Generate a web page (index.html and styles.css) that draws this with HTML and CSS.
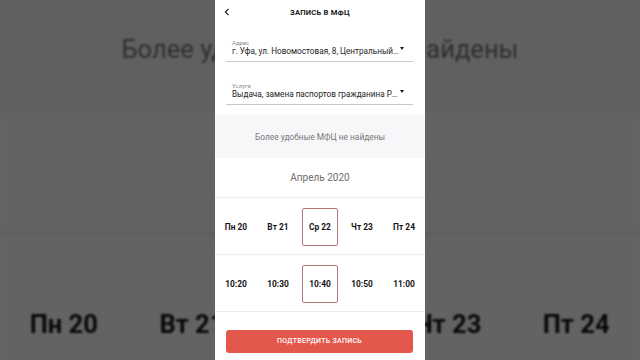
FILE: index.html
```html
<!DOCTYPE html>
<html lang="ru">
<head>
<meta charset="utf-8">
<title>Запись в МФЦ</title>
<link rel="stylesheet" href="styles.css">
</head>
<body>
<div class="stage">
  <div class="backdrop" aria-hidden="true">
    <div class="screen">
      <div class="top-spacer"></div>
      <div class="info">Более удобные МФЦ не найдены</div>
      <div class="month"></div>
      <div class="row days">
        <div class="cell"><span class="chip">Пн 20</span></div>
        <div class="cell"><span class="chip">Вт 21</span></div>
        <div class="cell"><span class="chip selected"></span></div>
        <div class="cell"><span class="chip">Чт 23</span></div>
        <div class="cell"><span class="chip">Пт 24</span></div>
      </div>
    </div>
  </div>

  <div class="screen main">
    <div class="header">
      <span class="back">
        <svg width="6" height="8" viewBox="0 0 6 8"><path d="M4.5 0.8 L1.4 4 L4.5 7.2" fill="none" stroke="#222" stroke-width="1.2"/></svg>
      </span>
      <div class="title">ЗАПИСЬ В МФЦ</div>
      <span></span>
    </div>
    <div class="form">
      <div class="field">
        <div class="label">Адрес</div>
        <div class="value"><span class="text">г. Уфа, ул. Новомостовая, 8, Центральный офис</span><span class="caret"></span></div>
      </div>
      <div class="field">
        <div class="label">Услуга</div>
        <div class="value"><span class="text">Выдача, замена паспортов гражданина России</span><span class="caret"></span></div>
      </div>
    </div>
    <div class="info">Более удобные МФЦ не найдены</div>
    <div class="month">Апрель 2020</div>
    <div class="row days">
      <div class="cell"><span class="chip">Пн 20</span></div>
      <div class="cell"><span class="chip">Вт 21</span></div>
      <div class="cell"><span class="chip selected">Ср 22</span></div>
      <div class="cell"><span class="chip">Чт 23</span></div>
      <div class="cell"><span class="chip">Пт 24</span></div>
    </div>
    <div class="row times">
      <div class="cell"><span class="chip">10:20</span></div>
      <div class="cell"><span class="chip">10:30</span></div>
      <div class="cell"><span class="chip selected">10:40</span></div>
      <div class="cell"><span class="chip">10:50</span></div>
      <div class="cell"><span class="chip">11:00</span></div>
    </div>
    <div class="actions">
      <button class="confirm">ПОДТВЕРДИТЬ ЗАПИСЬ</button>
    </div>
  </div>
</div>
</body>
</html>
```

FILE: styles.css
```css
* { box-sizing: border-box; }
html, body { margin: 0; padding: 0; }
body {
  background: #646464;
  font-family: Roboto, "Noto Sans", "Liberation Sans", sans-serif;
  overflow: hidden;
}
.stage {
  position: relative;
  width: 640px;
  height: 360px;
  display: flex;
  justify-content: center;
  overflow: hidden;
}
.backdrop {
  position: absolute;
  inset: 0;
  display: flex;
  justify-content: center;
  filter: blur(1px) brightness(0.39);
}
.backdrop .screen {
  transform: scale(3.05);
  transform-origin: 50% 50%;
}
.top-spacer { height: 115px; }
.screen {
  width: 210px;
  height: 360px;
  background: #fff;
  display: flex;
  flex-direction: column;
  flex-shrink: 0;
}
.main { position: relative; }

.header {
  height: 24px;
  display: grid;
  grid-template-columns: 24px 1fr 24px;
  align-items: center;
}
.back {
  padding-left: 9px;
  display: flex;
  align-items: center;
}
.title {
  text-align: center;
  font-size: 7.6px;
  font-weight: 700;
  color: #1a1a1a;
  letter-spacing: 0.2px;
}

.form {
  padding: 15px 12px 0 11px;
  display: flex;
  flex-direction: column;
  gap: 20px;
}
.field {
  border-bottom: 1px solid #c9c9c9;
  padding-bottom: 4px;
}
.label {
  font-size: 6px;
  line-height: 7px;
  color: #8a8a8a;
  padding-left: 6px;
}
.value {
  display: flex;
  align-items: center;
  height: 11px;
  padding-left: 6px;
}
.value .text {
  flex: 1;
  min-width: 0;
  white-space: nowrap;
  overflow: hidden;
  text-overflow: ellipsis;
  font-size: 8.2px;
  line-height: 11px;
  color: #1e1e1e;
}
.caret {
  width: 0;
  height: 0;
  border-left: 2.5px solid transparent;
  border-right: 2.5px solid transparent;
  border-top: 3px solid #1a1a1a;
  margin: 0 9px 6px 1px;
}

.info {
  margin-top: 10px;
  height: 43px;
  background: #f7f7fa;
  display: flex;
  align-items: center;
  justify-content: center;
  font-size: 8.4px;
  color: #777;
}
.backdrop .info { margin-top: 0; }
.month {
  height: 40px;
  display: flex;
  align-items: center;
  justify-content: center;
  font-size: 10px;
  color: #6e6e6e;
  border-bottom: 1px solid #ededed;
}
.row {
  height: 57px;
  display: grid;
  grid-template-columns: repeat(5, 1fr);
  border-bottom: 1px solid #ededed;
}
.cell {
  display: flex;
  align-items: center;
  justify-content: center;
  padding-top: 2px;
}
.chip {
  width: 36px;
  height: 38px;
  display: flex;
  align-items: center;
  justify-content: center;
  font-size: 8.4px;
  font-weight: 700;
  color: #141414;
  border: 1px solid transparent;
  border-radius: 2px;
  white-space: nowrap;
}
.chip.selected {
  border-color: #b57878;
}

.actions {
  padding: 16px 12px 0 11px;
}
.confirm {
  width: 100%;
  height: 23px;
  border: none;
  border-radius: 3px;
  background: #e4574d;
  color: #fff;
  font-family: inherit;
  font-size: 7px;
  font-weight: 500;
  letter-spacing: 0.3px;
  padding: 0;
}
```
